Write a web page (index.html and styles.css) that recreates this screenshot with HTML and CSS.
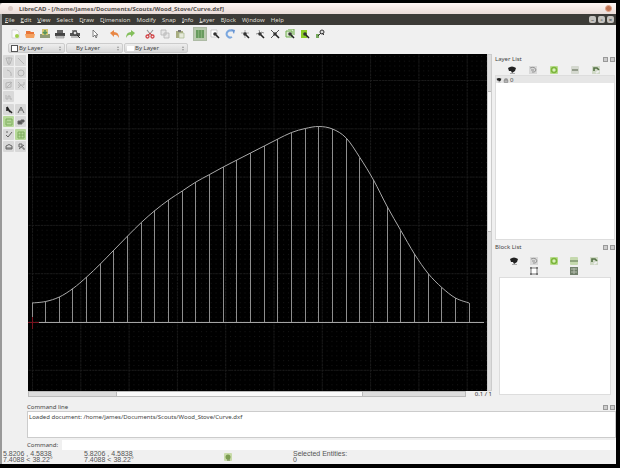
FILE: index.html
```html
<!DOCTYPE html>
<html lang="en">
<head>
<meta charset="utf-8">
<title>LibreCAD</title>
<link rel="stylesheet" href="styles.css">
</head>
<body>
<svg class="defs" aria-hidden="true">
  <symbol id="eye" viewBox="0 0 10 10"><path d="M1 3Q5 0 9 3L8 6 5 8 4 6 2 6Z" fill="#222"/><path d="M3 8.500h5" stroke="#aaa"/></symbol>
  <symbol id="eye-off" viewBox="0 0 10 10"><rect x="1" y="1" width="8" height="8" fill="#d8d8d8"/><path d="M2 3q5-2 6 2q-1 3-4 2M3 5h3" fill="none" stroke="#929292"/></symbol>
  <symbol id="plus" viewBox="0 0 10 10"><rect x="1" y="1" width="8" height="8" rx="1" fill="#b9dd8d"/><circle cx="5" cy="5" r="2.5" fill="#d9f0bb" stroke="#7cb53c" stroke-width="1.6"/></symbol>
  <symbol id="minus" viewBox="0 0 10 10"><rect x="1" y="1" width="8" height="8" rx="1" fill="#d4d8cf"/><path d="M2 5h6" stroke="#949c8c" stroke-width="2"/></symbol>
  <symbol id="minus-green" viewBox="0 0 10 10"><rect x="1" y="1" width="8" height="8" rx="1" fill="#c5d9ae"/><path d="M1 5h8" stroke="#8fa57e" stroke-width="2"/></symbol>
  <symbol id="edit" viewBox="0 0 10 10"><rect x="1" y="1" width="8" height="8" fill="#d0d9c6"/><path d="M3 6V3h3l2 2" fill="none" stroke="#537044" stroke-width="1.6"/><path d="M5 8l3-2" stroke="#eee" stroke-width="2"/></symbol>
  <symbol id="insert" viewBox="0 0 10 10"><path d="M2 2h6v6H2z" fill="#fff" stroke="#777"/><path d="M1 1h2v2H1zM7 1h2v2H7zM1 7h2v2H1zM7 7h2v2H7z" fill="#777"/></symbol>
  <symbol id="grid-box" viewBox="0 0 10 10"><rect x="1" y="1" width="8" height="8" fill="#71806b"/><path d="M2 3h6M2 6h6M5 2v6" stroke="#b5bdae"/></symbol>
  <symbol id="glass" viewBox="0 0 10 10"><circle cx="5" cy="5" r="1.8" fill="#333"/><path d="M6 6l3 3" stroke="#222" stroke-width="1.6"/></symbol>
</svg>
<div class="window">
  <header class="title"><span class="app-dot"></span><h1>LibreCAD - [/home/james/Documents/Scouts/Wood_Stove/Curve.dxf]</h1><button class="close" aria-label="Close window"></button></header>
  <nav class="menu">
    <button><u>F</u>ile</button><button><u>E</u>dit</button><button><u>V</u>iew</button><button><u>S</u>elect</button><button><u>D</u>raw</button><button><u>D</u>imension</button><button><u>M</u>odify</button><button><u>S</u>nap</button><button><u>I</u>nfo</button><button><u>L</u>ayer</button><button><u>B</u>lock</button><button><u>W</u>indow</button><button><u>H</u>elp</button>
    <span class="mdi"><button aria-label="Minimize">–</button><button aria-label="Restore">▫</button><button aria-label="Close document">×</button></span>
  </nav>
  <div class="toolbar">
    <div class="group">
      <button aria-label="New"><svg viewBox="0 0 10 10"><path d="M2 1h5l2 2v6H2z" fill="#fafafa" stroke="#c8c8c8" stroke-width=".7"/><circle cx="7" cy="7" r="2" fill="#a0cf4c"/></svg></button>
      <button aria-label="New from template"><svg viewBox="0 0 10 10"><path d="M1 2h4l1 1h3v6H1z" fill="#e87437"/><path d="M0 5h10L9 9H1z" fill="#f4a05e"/></svg></button>
      <button aria-label="Save"><svg viewBox="0 0 10 10"><path d="M0 5h10v4H0z" fill="#8f9a76"/><path d="M2 0h6v6H2z" fill="#d7c873"/><path d="M5 1v4M3 3l2 2 2-2" fill="none" stroke="#58955b" stroke-width="1.5"/></svg></button>
      <button aria-label="Print"><svg viewBox="0 0 10 10"><path d="M2 1h6v3H2z" fill="#999"/><path d="M3 1v3M5 1v3M7 1v3" stroke="#333"/><path d="M0 4h10v3H0z" fill="#444"/><path d="M1 7h8v2H1z" fill="#ccc" stroke="#777" stroke-width=".5"/></svg></button>
      <button aria-label="Print preview"><svg viewBox="0 0 10 10"><path d="M2 1h5v3H2z" fill="#888"/><path d="M0 4h10v3H0z" fill="#555"/><path d="M1 7h8v2H1z" fill="#bbb"/><circle cx="5" cy="4" r="2" fill="#ddd" stroke="#333"/><path d="M7 6l3 3" stroke="#222"/></svg></button>
    </div>
    <div class="group">
      <button aria-label="Select"><svg viewBox="0 0 10 10"><path d="M3 1v7l2-2 1 3 1-1-1-2h2z" fill="#fff" stroke="#666" stroke-width=".8"/></svg></button>
    </div>
    <div class="group">
      <button aria-label="Undo"><svg viewBox="0 0 10 10"><path d="M0 4l4-3v2q5 0 5 6Q7 5 4 6v2z" fill="#e88745"/></svg></button>
      <button aria-label="Redo"><svg viewBox="0 0 10 10"><path d="M10 4L6 1v2Q1 3 1 9q2-4 5-3v2z" fill="#84bf5c"/></svg></button>
    </div>
    <div class="group">
      <button aria-label="Cut"><svg viewBox="0 0 10 10"><path d="M2 1l4 5M8 1L4 6" stroke="#999" stroke-width="1.2"/><circle cx="2.5" cy="7.5" r="1.5" fill="none" stroke="#d3474a" stroke-width="1.3"/><circle cx="7.5" cy="7.5" r="1.5" fill="none" stroke="#d3474a" stroke-width="1.3"/><path d="M3 6l2-2 2 2" fill="none" stroke="#d3474a"/></svg></button>
      <button aria-label="Copy"><svg viewBox="0 0 10 10"><path d="M1 1h5v5H1zM4 4h5v5H4z" fill="#e7e7e7" stroke="#b4b4b4" stroke-width=".8"/></svg></button>
      <button aria-label="Paste"><svg viewBox="0 0 10 10"><path d="M1 2h7v7H1z" fill="#a8ad80"/><path d="M3 1h3v2H3z" fill="#777"/><path d="M4 4h5v5H4z" fill="#e5e9d9" stroke="#a7b78d" stroke-width=".7"/></svg></button>
    </div>
    <div class="group">
      <button class="active" aria-label="Grid"><svg viewBox="0 0 10 10"><path d="M1 1h8v8H1z" fill="#83b076"/><path d="M2 1v8M5 1v8M8 1v8" stroke="#4e8749"/></svg></button>
      <button aria-label="Draft"><svg viewBox="0 0 10 10"><path d="M1 1h6v7H1z" fill="#fff" stroke="#bbb" stroke-width=".7"/><use href="#glass"/></svg></button>
      <button aria-label="Redraw"><svg viewBox="0 0 10 10"><path d="M7 8a3.5 3.5 0 1 1 0-6" fill="none" stroke="#7ca8df" stroke-width="2"/><path d="M6 0l4 1-1 4z" fill="#6694d2"/></svg></button>
      <button aria-label="Zoom in"><svg viewBox="0 0 10 10"><path d="M5 1v8M1 4h8" stroke="#999" stroke-width=".8"/><use href="#glass"/></svg></button>
      <button aria-label="Zoom out"><svg viewBox="0 0 10 10"><path d="M4 1l1 3-4 1M6 3l3 1" fill="none" stroke="#777" stroke-width=".8"/><use href="#glass"/></svg></button>
      <button aria-label="Zoom auto"><svg viewBox="0 0 10 10"><path d="M1 1l8 8M9 1L1 9" stroke="#555"/><use href="#glass"/></svg></button>
      <button aria-label="Previous view"><svg viewBox="0 0 10 10"><path d="M1 2h6v6H1zM3 0h6v6" fill="#dbe8d0" stroke="#6eae4c"/><use href="#glass"/></svg></button>
      <button aria-label="Zoom window"><svg viewBox="0 0 10 10"><path d="M1 1h6v8H1z" fill="#8ccc29"/><use href="#glass"/></svg></button>
      <button aria-label="Zoom pan"><svg viewBox="0 0 10 10"><path d="M1 5h3v4H1z" fill="#76a95c"/><circle cx="7" cy="3" r="2" fill="#ddd" stroke="#333"/><path d="M6 4L3 7M7 4l2 2" stroke="#333"/></svg></button>
    </div>
  </div>
  <div class="pens">
    <label class="pen"><span class="swatch"></span><select aria-label="Pen colour"><option>By Layer</option></select></label>
    <label class="pen"><select aria-label="Pen width"><option>By Layer</option></select></label>
    <label class="pen"><span class="line"></span><select aria-label="Line type"><option>By Layer</option></select></label>
  </div>
  <div class="main">
    <aside class="tools">
      <div class="set muted">
        <button aria-label="Points"><svg viewBox="0 0 10 10"><path d="M2 2h6L6 8H4z"/><path d="M5 1v8"/></svg></button>
        <button aria-label="Lines"><svg viewBox="0 0 10 10"><path d="M2 2l6 6"/></svg></button>
        <button aria-label="Arcs"><svg viewBox="0 0 10 10"><path d="M3 2q5 1 4 6"/></svg></button>
        <button aria-label="Circles"><svg viewBox="0 0 10 10"><circle cx="5" cy="5" r="3"/></svg></button>
        <button aria-label="Ellipses"><svg viewBox="0 0 10 10"><path d="M2 8V3l5-1v5zM3 7l5-5"/></svg></button>
        <button aria-label="Splines"><svg viewBox="0 0 10 10"><path d="M2 2l6 6M2 5h6V2M2 8l3-3"/></svg></button>
        <button aria-label="Polylines"><svg viewBox="0 0 10 10"><path d="M2 3v4h2V4h2v3h2"/></svg></button>
      </div>
      <div class="set">
        <button aria-label="Dimension"><svg viewBox="0 0 10 10"><path d="M3 2l3 5M3 2v4M6 6l2 2" stroke="#222" stroke-width="1.600"/></svg></button>
        <button aria-label="Text"><svg viewBox="0 0 10 10"><path d="M2 8l3-6 3 6M4 5h2"/></svg></button>
        <button class="green" aria-label="Hatch"><svg viewBox="0 0 10 10"><path d="M2 2h6v6H2zM3 5h4"/></svg></button>
        <button aria-label="Image"><svg viewBox="0 0 10 10"><path d="M2 4h4v3H2zM5 3h3v2H5z" fill="#555"/></svg></button>
      </div>
      <div class="set">
        <button aria-label="Modify"><svg viewBox="0 0 10 10"><path d="M2 5l2 2 4-5M2 2h2"/></svg></button>
        <button class="green" aria-label="Block"><svg viewBox="0 0 10 10"><path d="M2 2h6v6H2zM2 5h6M5 2v6"/></svg></button>
        <button aria-label="Measure"><svg viewBox="0 0 10 10"><path d="M2 7V4q3-3 6 0v3zM2 6h6"/></svg></button>
        <button aria-label="Select entities"><svg viewBox="0 0 10 10"><path d="M3 2h3v3H3zM3 7l5-4M6 6h2v2"/></svg></button>
      </div>
    </aside>
    <section class="view">
      <svg class="drawing" viewBox="0 0 459 338" preserveAspectRatio="xMinYMin slice" role="img" aria-label="Curve drawing">
        <defs>
          <pattern id="minor" width="4.83" height="4.83" patternUnits="userSpaceOnUse" x="4" y="26"><rect width="1" height="1" fill="#161616"/></pattern>
          <pattern id="major" width="48.3" height="48.3" patternUnits="userSpaceOnUse" x="4" y="26"><path d="M0 .5H49M.5 0V49" stroke="#1b1b1b" stroke-dasharray="2 1" fill="none"/></pattern>
        </defs>
        <rect width="459" height="338" fill="#000"/><rect width="459" height="338" fill="url(#minor)"/><rect width="459" height="338" fill="url(#major)"/>
        <path class="ordinates" id="ordinates"/>
        <path class="curve" id="curve"/>
        <path d="M9 268.500H456" stroke="#a4a4a4"/><path d="M0 268.500H11M4.500 263V275" stroke="#76121e"/>
      </svg>
      <div class="vbar"><span></span></div>
      <div class="hbar"><span></span></div>
      <output class="scale">0.1 / 1</output>
    </section>
    <aside class="docks">
      <section class="dock layers">
        <div class="dock-head"><h2>Layer List</h2><span><button aria-label="Float layers"></button><button aria-label="Close layers"></button></span></div>
        <div class="row"><button aria-label="Show all"><svg><use href="#eye"/></svg></button><button aria-label="Hide all"><svg><use href="#eye-off"/></svg></button><button aria-label="Add layer"><svg><use href="#plus"/></svg></button><button aria-label="Remove layer"><svg><use href="#minus"/></svg></button><button aria-label="Edit layer"><svg><use href="#edit"/></svg></button></div>
        <div class="list"><div class="item"><svg viewBox="0 0 10 10"><use href="#eye"/></svg><svg viewBox="0 0 10 10"><path d="M3 5V3h4v2M2 5h6v4H2z" fill="#bbb" stroke="#777"/></svg><span>0</span></div></div>
      </section>
      <section class="dock blocks">
        <div class="dock-head"><h2>Block List</h2><span><button aria-label="Float blocks"></button><button aria-label="Close blocks"></button></span></div>
        <div class="row"><button aria-label="Show blocks"><svg><use href="#eye"/></svg></button><button aria-label="Hide blocks"><svg><use href="#eye-off"/></svg></button><button aria-label="Add block"><svg><use href="#plus"/></svg></button><button aria-label="Remove block"><svg><use href="#minus-green"/></svg></button><button aria-label="Rename block"><svg><use href="#edit"/></svg></button></div>
        <div class="row second"><button aria-label="Edit block"><svg><use href="#insert"/></svg></button><button aria-label="Insert block"><svg><use href="#grid-box"/></svg></button></div>
        <div class="list"></div>
      </section>
    </aside>
  </div>
  <section class="command">
    <div class="dock-head"><h2>Command line</h2><span><button aria-label="Float command line"></button><button aria-label="Close command line"></button></span></div>
    <div class="log">Loaded document: /home/james/Documents/Scouts/Wood_Stove/Curve.dxf</div>
    <div class="prompt"><label for="cmd">Command:</label><input id="cmd" type="text"></div>
  </section>
  <footer class="status">
    <div>5.8206 , 4.5838<br>7.4088 &lt; 38.22°</div>
    <div>5.8206 , 4.5838<br>7.4088 &lt; 38.22°</div>
    <svg viewBox="0 0 10 10"><rect x="1" y="1" width="8" height="8" rx="1" fill="#c8dba9"/><circle cx="5" cy="5" r="2.500" fill="#7b9c50"/><path d="M4 8h3" stroke="#627c43"/></svg>
    <div>Selected Entities:<br>0</div>
  </footer>
</div>
<script src="curve.js"></script>
</body>
</html>
```
FILE: curve.js
```js
// Ordinate heights above the baseline, left to right.
const heights = [19.5, 21, 25.5, 34, 45.5, 58.5, 72.5, 86.5, 100, 112, 122.5, 131.5, 140.5, 148, 155.5, 162.5, 169.5, 176.5, 183.5, 190, 194, 196, 193.5, 184.5, 165, 142.5, 116, 92, 68.5, 49, 35, 24.5, 19.5];
const base = 268.5;
const step = 13.66;
const pts = heights.map((h, i) => [4 + i * step, base - h]);
document.getElementById('ordinates').setAttribute('d',
  pts.map(([x, y]) => `M${Math.floor(x) + 0.5} ${y}V${base}`).join(''));

// Catmull-Rom spline through the ordinate tops.
let d = `M${pts[0]}`;
for (let i = 0; i < pts.length - 1; i++) {
  const a = pts[Math.max(i - 1, 0)], b = pts[i], c = pts[i + 1];
  const e = pts[Math.min(i + 2, pts.length - 1)];
  d += `C${b[0] + (c[0] - a[0]) / 6} ${b[1] + (c[1] - a[1]) / 6} ${c[0] - (e[0] - b[0]) / 6} ${c[1] - (e[1] - b[1]) / 6} ${c}`;
}
document.getElementById('curve').setAttribute('d', d);
```
FILE: styles.css
```css
* { box-sizing: border-box; }
body {
  margin: 0;
  background: #000;
  color: #444;
  font: 6px/8px "Noto Sans", "Open Sans", sans-serif;
}
button, select, input { margin: 0; padding: 0; border: 0; background: none; color: inherit; font: inherit; }
button { display: block; }
button svg { margin: auto; }
svg { display: block; width: 10px; height: 10px; }
h1, h2 { margin: 0; font-size: 6px; line-height: 8px; font-weight: 400; white-space: nowrap; }
.defs { position: absolute; width: 0; height: 0; }
.window {
  display: flex;
  flex-direction: column;
  height: 100vh;
  border: solid #000;
  border-width: 3px 4px 4px 0;
  background: #f0f0f0;
  background-clip: padding-box;
  box-shadow: inset 2px 0 #999;
}
.title { display: flex; align-items: center; height: 11px; padding: 0 4px 0 8px; border-radius: 3px 3px 0 0; background: linear-gradient(#fff6f3, #e9dcd8); color: #544f4d; }
.title h1 { font-weight: 700; }
.app-dot { width: 5px; height: 5px; margin-right: 6px; border-radius: 50%; background: #dccbc6; }
.close { width: 7px; height: 7px; margin-left: auto; border: 1px solid #e0a58b; border-radius: 50%; background: #c07251; }
.menu { display: flex; align-items: center; gap: 6px; height: 11px; margin-left: 2px; padding: 0 2px 0 3px; background: #3c3b37; color: #dfdbd2; }
.menu u { text-decoration-thickness: 1px; text-underline-offset: 0; }
.mdi { display: flex; gap: 2px; margin-left: auto; }
.mdi button { width: 7px; height: 7px; border-radius: 2px; background: #c4c2be; color: #333; line-height: 6px; }
.toolbar { display: flex; align-items: center; gap: 6px; height: 17px; padding-left: 8px; }
.group { display: flex; gap: 1px; }
.group button { width: 14px; height: 14px; }
.group .active { border: 1px solid #aebba5; background: #bacbb0; }
.pens { display: flex; gap: 1px; height: 12px; padding: 1px 0 1px 8px; }
.pen { position: relative; display: flex; align-items: center; gap: 1px; width: 57px; padding: 0 2px; border: 1px solid #ccc; border-radius: 2px; background: linear-gradient(#eee, #d7d7d7); }
.pen::before, .pen::after { content: ""; position: absolute; right: 3px; top: 2px; border: solid transparent; border-width: 0 1px 2px; border-bottom-color: #999; }
.pen::after { top: 5px; border-width: 2px 1px 0; border-top-color: #999; }
.pen:nth-child(2) { padding-left: 9px; }
.pen:nth-child(3) { width: 64px; }
.pen select { flex: 1; min-width: 0; appearance: none; line-height: 8px; }
.swatch { width: 7px; height: 7px; border: 1px solid #555; background: #fff; }
.line { width: 7px; height: 5px; background: #fff; }
.main { display: flex; flex: 1; min-height: 0; }
.tools { flex: none; width: 28px; padding: 1px 2px 0 3px; }
.set { display: grid; grid-template-columns: 11px 11px; gap: 1px; margin-bottom: 2px; }
.tools button { width: 11px; height: 11px; border-radius: 1px; background: #d9d9d9; }
.tools svg { fill: none; stroke: #666; }
.tools .muted svg { stroke: #b4b4b4; }
.tools .green { background: #b7d99b; }
.tools .green svg { stroke: #7dac5c; }
.view { display: grid; flex: 1; grid-template: minmax(0, 1fr) 6px / minmax(0, 1fr) 5px; min-width: 0; margin-bottom: 5px; }
.drawing { width: 100%; height: 100%; }
.ordinates { fill: none; stroke: #8e8e8e; }
.curve { fill: none; stroke: #aaa; }
.vbar { padding: 36px 0 158px; border: 1px solid #ccc; background: #ddd; }
.vbar span { display: block; height: 100%; background: #f7f7f7; border: solid #bbb; border-width: 1px 0; }
.hbar { grid-area: 2 / 1; margin-right: 21px; padding: 0 102px 0 87px; border: 1px solid #bbb; background: #ddd; }
.hbar span { display: block; height: 100%; background: #fafafa; border: solid #bbb; border-width: 0 1px; }
.scale { grid-area: 2 / 1 / 3 / 3; justify-self: end; line-height: 6px; background: #eee; color: #333; white-space: nowrap; }
.docks { display: flex; flex: 0 0 124px; flex-direction: column; gap: 3px; padding: 1px 1px 7px 3px; }
.dock { display: flex; flex-direction: column; }
.layers { flex: 186; }
.blocks { flex: 152; }
.dock-head { display: flex; justify-content: space-between; align-items: center; height: 8px; }
.dock-head span { display: flex; gap: 2px; }
.dock-head button { width: 5px; height: 5px; border: 1px solid #999; background: #ccc; }
.row { display: flex; gap: 11px; padding: 2px 0 0 12px; }
.blocks .row { gap: 10px; padding: 5px 0 0 14px; }
.blocks .second { gap: 30px; padding: 0 0 1px 34px; }
.list { flex: 1; border: 1px solid #ddd; background: #fff; }
.blocks .list { margin: 0 4px; }
.item { display: flex; align-items: center; gap: 1px; height: 7px; background: #e6e6e6; }
.item svg { width: 6px; height: 6px; }
.command { margin-left: 27px; }
.command .dock-head { height: 9px; padding: 1px 1px 0 0; }
.log { height: 27px; padding: 1px; border: 1px solid #ccc; background: #fff; }
.prompt { display: flex; gap: 4px; height: 12px; padding-top: 2px; }
.prompt label { line-height: 10px; }
.prompt input { flex: 1; min-width: 0; background: #fff; }
.status { display: grid; grid-template-columns: 81px 139px 70px 1fr; height: 14px; padding: 1px 0 0 3px; font: 7px/6px "Liberation Sans", sans-serif; color: #555; }
.status svg { margin-top: 1px; }
```
